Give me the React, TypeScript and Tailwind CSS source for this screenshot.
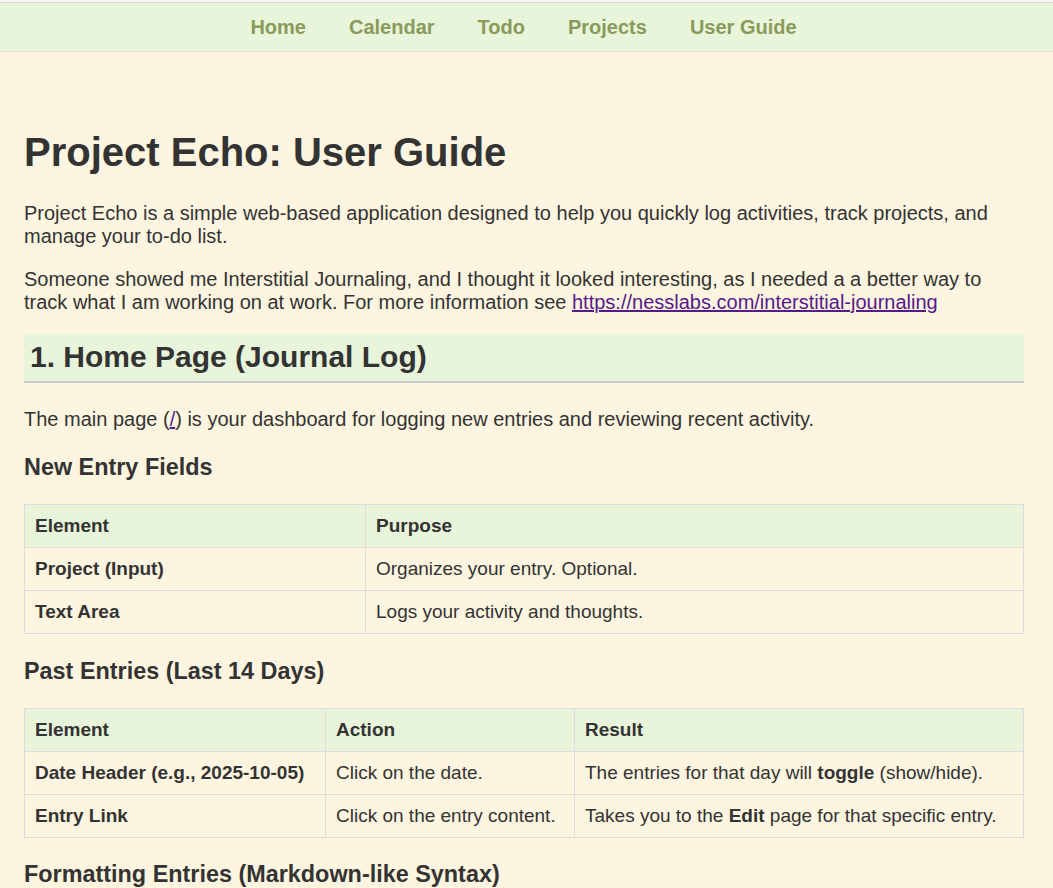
const navLinks = ["Home", "Calendar", "Todo", "Projects", "User Guide"];

function Nav() {
  return (
    <>
      <div className="h-[2px] bg-[#f6f6f6]" />
      <nav className="flex h-[50px] items-center justify-center gap-[43px] border-y border-t-[#dcdcdc] border-b-[#e3e0d2] bg-[#e8f5da] pr-[6px]">
        {navLinks.map((l) => (
          <a key={l} href="#" className="text-[20px] font-bold leading-[23px] text-[#8a9a5b]">
            {l}
          </a>
        ))}
      </nav>
    </>
  );
}

function Cell({ children, head, bold }: { children: React.ReactNode; head?: boolean; bold?: boolean }) {
  const Tag = head ? "th" : "td";
  return (
    <Tag
      className={`border border-[#dcdcdc] px-[10px] py-[10px] text-left align-middle text-[19px] leading-[22px] ${
        head || bold ? "font-bold" : "font-normal"
      } ${head ? "bg-[#e8f5da]" : ""}`}
    >
      {children}
    </Tag>
  );
}

export default function App() {
  return (
    <div className="min-h-screen bg-[#fdf5df] text-[#333] [font-family:'Liberation_Sans',Arial,sans-serif]">
      <Nav />
      <main className="ml-[24px] w-[1000px] pt-[77px] text-[20px] leading-[23px]">
        <h1 className="mb-[27px] text-[40px] font-bold leading-[46px]">Project Echo: User Guide</h1>
        <p className="mb-[20px]">
          Project Echo is a simple web-based application designed to help you quickly log activities, track projects, and
          manage your to-do list.
        </p>
        <p className="mb-[20px]">
          Someone showed me Interstitial Journaling, and I thought it looked interesting, as I needed a a better way to
          track what I am working on at work. For more information see{" "}
          <a href="#" className="text-[#551a8b] underline">
            https://nesslabs.com/interstitial-journaling
          </a>
        </p>

        <h2 className="mt-[20px] mb-[25px] border-b-2 border-[#cccccc] bg-[#e8f5da] px-[6px] py-[6px] text-[30px] font-bold leading-[34.5px]">
          1. Home Page (Journal Log)
        </h2>
        <p className="mb-[20px]">
          The main page (
          <a href="#" className="text-[#551a8b] underline">
            /
          </a>
          ) is your dashboard for logging new entries and reviewing recent activity.
        </p>

        <h3 className="my-[23.4px] text-[23.4px] font-bold leading-[27px]">New Entry Fields</h3>
        <table className="w-full table-fixed border-collapse">
          <colgroup>
            <col className="w-[341px]" />
            <col />
          </colgroup>
          <thead>
            <tr>
              <Cell head>Element</Cell>
              <Cell head>Purpose</Cell>
            </tr>
          </thead>
          <tbody>
            <tr>
              <Cell bold>Project (Input)</Cell>
              <Cell>Organizes your entry. Optional.</Cell>
            </tr>
            <tr>
              <Cell bold>Text Area</Cell>
              <Cell>Logs your activity and thoughts.</Cell>
            </tr>
          </tbody>
        </table>

        <h3 className="my-[23.4px] text-[23.4px] font-bold leading-[27px]">Past Entries (Last 14 Days)</h3>
        <table className="w-full table-fixed border-collapse">
          <colgroup>
            <col className="w-[301px]" />
            <col className="w-[249px]" />
            <col />
          </colgroup>
          <thead>
            <tr>
              <Cell head>Element</Cell>
              <Cell head>Action</Cell>
              <Cell head>Result</Cell>
            </tr>
          </thead>
          <tbody>
            <tr>
              <Cell bold>Date Header (e.g., 2025-10-05)</Cell>
              <Cell>Click on the date.</Cell>
              <Cell>
                The entries for that day will <strong>toggle</strong> (show/hide).
              </Cell>
            </tr>
            <tr>
              <Cell bold>Entry Link</Cell>
              <Cell>Click on the entry content.</Cell>
              <Cell>
                Takes you to the <strong>Edit</strong> page for that specific entry.
              </Cell>
            </tr>
          </tbody>
        </table>

        <h3 className="my-[23.4px] text-[23.4px] font-bold leading-[27px]">Formatting Entries (Markdown-like Syntax)</h3>
      </main>
    </div>
  );
}
